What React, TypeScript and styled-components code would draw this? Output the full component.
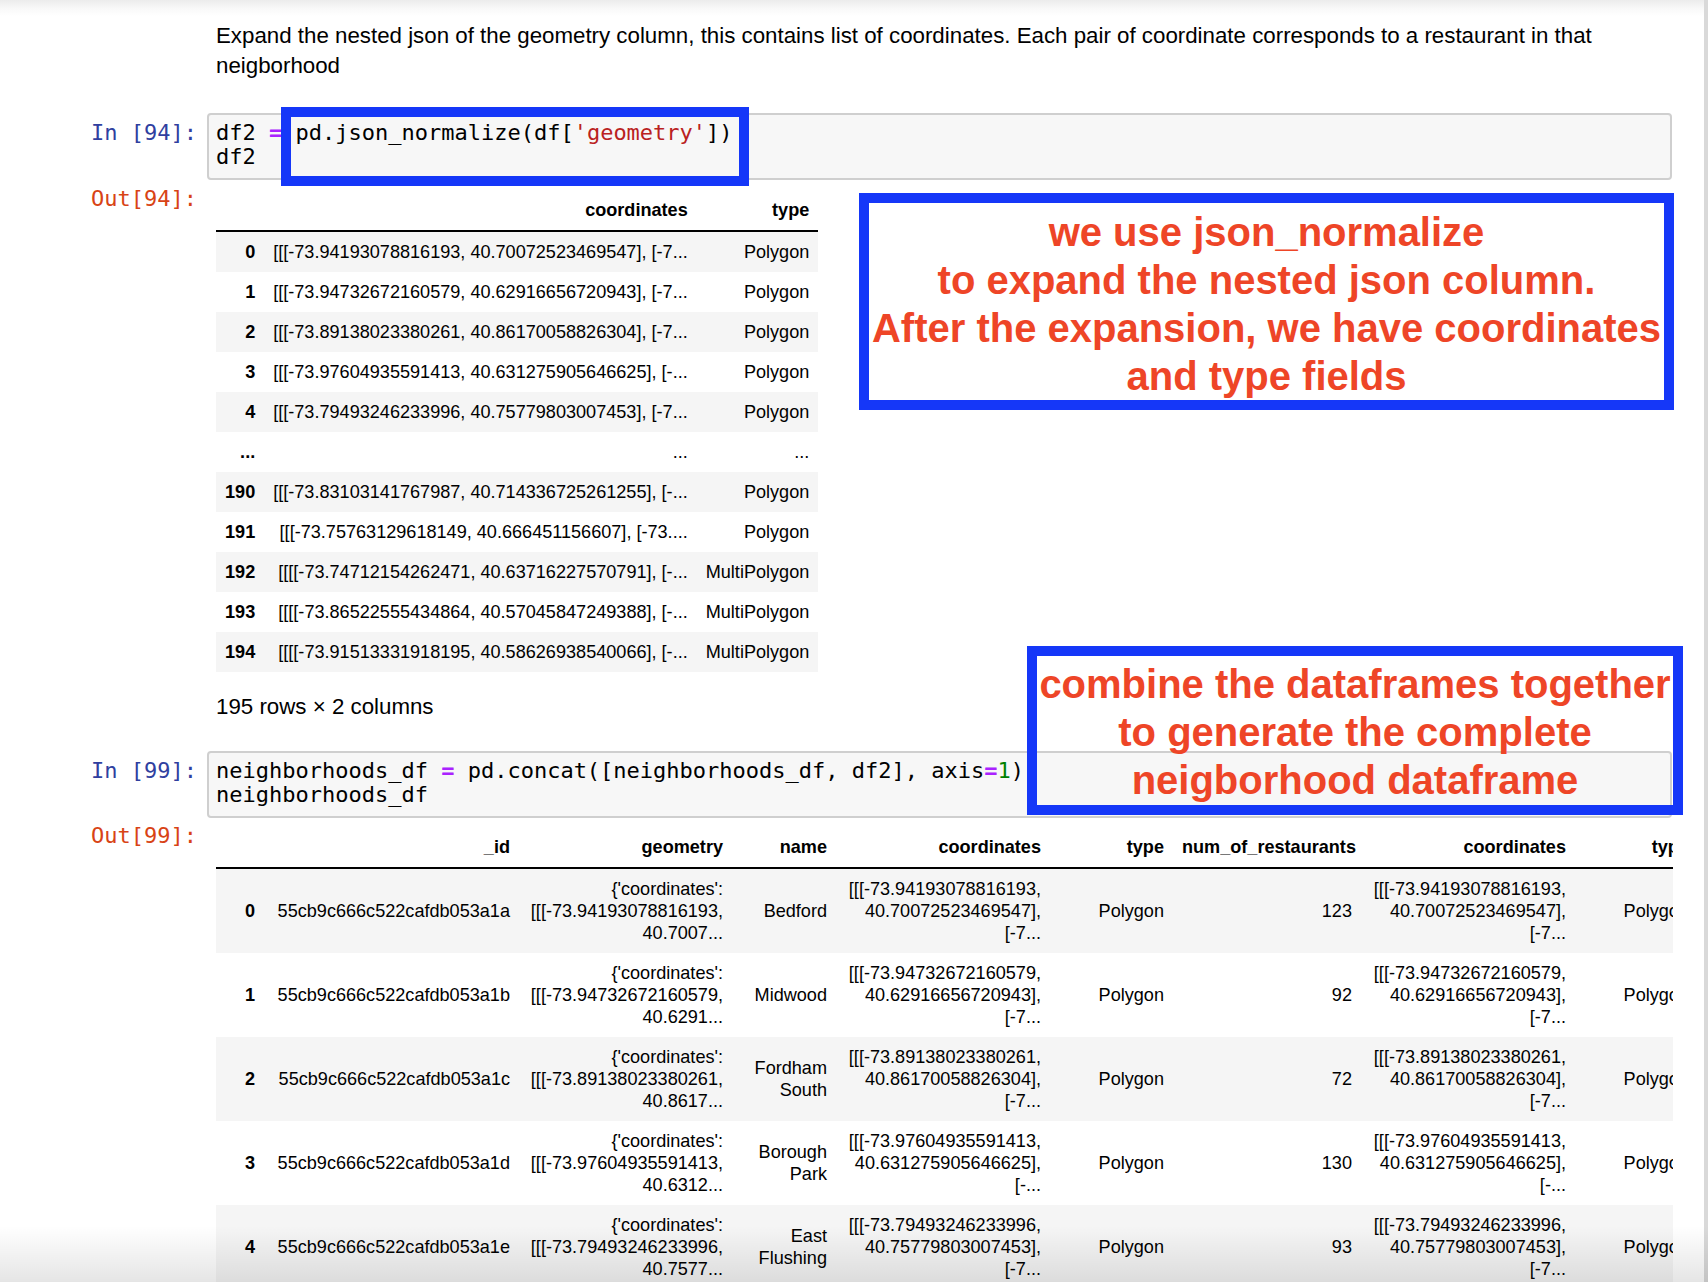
import React from "react";
import styled, { createGlobalStyle } from "styled-components";

const GlobalStyle = createGlobalStyle`
  html, body { margin: 0; padding: 0; background: #ffffff; }
  body {
    font-family: "Liberation Sans", Arial, Helvetica, sans-serif;
    color: #000;
  }
`;

const Screen = styled.div`
  position: relative;
  display: flex;
  height: 1282px;
  overflow: hidden;
  background: linear-gradient(#ececec 0px, #f8f8f8 8px, #ffffff 16px);
`;

const Notebook = styled.main`
  flex: 1;
  min-width: 0;
  padding-top: 21px;
`;

const ScrollTrack = styled.div`
  flex: 0 0 4px;
  background: #d9d9d9;
`;

const BottomShade = styled.div`
  position: absolute;
  left: 0;
  right: 0;
  bottom: 0;
  height: 56px;
  background: linear-gradient(rgba(0, 0, 0, 0), rgba(0, 0, 0, 0.1));
  pointer-events: none;
`;

const Cell = styled.section<{ $after: number }>`
  margin-bottom: ${(p) => p.$after}px;
`;

const Row = styled.div<{ $top?: number }>`
  position: relative;
  display: flex;
  align-items: flex-start;
  gap: 10px;
  margin-top: ${(p) => p.$top ?? 0}px;
`;

const Prompt = styled.div<{ $kind: "in" | "out" | "none" }>`
  flex: 0 0 197px;
  text-align: right;
  font-family: "DejaVu Sans Mono", "Liberation Mono", monospace;
  font-size: 22px;
  line-height: 24px;
  white-space: pre;
  color: ${(p) => (p.$kind === "out" ? "#D84315" : "#303F9F")};
  padding-top: ${(p) => (p.$kind === "in" ? 8 : 0)}px;
  margin-top: ${(p) => (p.$kind === "out" ? -2 : 0)}px;
`;

const Markdown = styled.div`
  flex: 0 0 1466px;
  box-sizing: border-box;
  padding: 0 9px;
`;

const Para = styled.p<{ $top?: number }>`
  margin: ${(p) => p.$top ?? 0}px 0 0;
  font-size: 22.3px;
  line-height: 29.5px;
`;

const CodeBox = styled.div`
  flex: 0 0 1465px;
  box-sizing: border-box;
  border: 2px solid #cfcfcf;
  border-radius: 4px;
  background: #f7f7f7;
  padding: 6px 7px 9px;
  font-family: "DejaVu Sans Mono", "Liberation Mono", monospace;
  font-size: 22px;
  line-height: 24px;
  white-space: pre;
  color: #000;
`;

const Op = styled.span`
  color: #aa22ff;
  font-weight: bold;
`;
const Str = styled.span`
  color: #ba2121;
`;
const Num = styled.span`
  color: #008000;
`;

const Output = styled.div`
  flex: 0 0 1466px;
  box-sizing: border-box;
  padding-left: 9px;
  padding-top: 1px;
  overflow: hidden;
`;

const DataTable = styled.table`
  border-collapse: collapse;
  border-spacing: 0;
  font-size: 18.1px;
  line-height: 22px;
  color: #000;

  tbody tr:nth-child(odd) {
    background: #f5f5f5;
  }
`;

const WideTable = styled(DataTable)`
  table-layout: fixed;
  width: 1482px;
`;

const Col = styled.col<{ $w: number }>`
  width: ${(p) => p.$w}px;
`;

const HeadCell = styled.th`
  text-align: right;
  vertical-align: bottom;
  padding: 9px;
  font-weight: bold;
  white-space: nowrap;
  border-bottom: 2px solid #000;
`;

const IndexCell = styled.th`
  text-align: right;
  vertical-align: middle;
  padding: 9px;
  font-weight: bold;
  white-space: nowrap;
`;

const DataCell = styled.td<{ $wrap?: boolean }>`
  text-align: right;
  vertical-align: middle;
  padding: 9px;
  white-space: ${(p) => (p.$wrap ? "normal" : "nowrap")};
`;

const Highlight = styled.div<{ $x: number; $y: number; $w: number; $h: number }>`
  position: absolute;
  left: ${(p) => p.$x}px;
  top: ${(p) => p.$y}px;
  width: ${(p) => p.$w}px;
  height: ${(p) => p.$h}px;
  box-sizing: border-box;
  border: 10px solid #1537f8;
  pointer-events: none;
`;

const Callout = styled(Highlight)<{ $pad: number }>`
  padding-top: ${(p) => p.$pad}px;
  text-align: center;
  font-family: "Liberation Sans", Arial, Helvetica, sans-serif;
  font-weight: bold;
  font-size: 40px;
  line-height: 48px;
  color: #ee4527;
  white-space: nowrap;
`;

const shortRows: [string, string, string][] = [
  ["0", "[[[-73.94193078816193, 40.70072523469547], [-7...", "Polygon"],
  ["1", "[[[-73.94732672160579, 40.62916656720943], [-7...", "Polygon"],
  ["2", "[[[-73.89138023380261, 40.86170058826304], [-7...", "Polygon"],
  ["3", "[[[-73.97604935591413, 40.631275905646625], [-...", "Polygon"],
  ["4", "[[[-73.79493246233996, 40.75779803007453], [-7...", "Polygon"],
  ["...", "...", "..."],
  ["190", "[[[-73.83103141767987, 40.714336725261255], [-...", "Polygon"],
  ["191", "[[[-73.75763129618149, 40.666451156607], [-73....", "Polygon"],
  ["192", "[[[[-73.74712154262471, 40.63716227570791], [-...", "MultiPolygon"],
  ["193", "[[[[-73.86522555434864, 40.57045847249388], [-...", "MultiPolygon"],
  ["194", "[[[[-73.91513331918195, 40.58626938540066], [-...", "MultiPolygon"],
];

type Hood = {
  idx: string;
  id: string;
  geometry: string;
  name: string;
  coords: string;
  type: string;
  count: string;
};

const hoods: Hood[] = [
  {
    idx: "0",
    id: "55cb9c666c522cafdb053a1a",
    geometry: "{'coordinates': [[[-73.94193078816193, 40.7007...",
    name: "Bedford",
    coords: "[[[-73.94193078816193, 40.70072523469547], [-7...",
    type: "Polygon",
    count: "123",
  },
  {
    idx: "1",
    id: "55cb9c666c522cafdb053a1b",
    geometry: "{'coordinates': [[[-73.94732672160579, 40.6291...",
    name: "Midwood",
    coords: "[[[-73.94732672160579, 40.62916656720943], [-7...",
    type: "Polygon",
    count: "92",
  },
  {
    idx: "2",
    id: "55cb9c666c522cafdb053a1c",
    geometry: "{'coordinates': [[[-73.89138023380261, 40.8617...",
    name: "Fordham South",
    coords: "[[[-73.89138023380261, 40.86170058826304], [-7...",
    type: "Polygon",
    count: "72",
  },
  {
    idx: "3",
    id: "55cb9c666c522cafdb053a1d",
    geometry: "{'coordinates': [[[-73.97604935591413, 40.6312...",
    name: "Borough Park",
    coords: "[[[-73.97604935591413, 40.631275905646625], [-...",
    type: "Polygon",
    count: "130",
  },
  {
    idx: "4",
    id: "55cb9c666c522cafdb053a1e",
    geometry: "{'coordinates': [[[-73.79493246233996, 40.7577...",
    name: "East Flushing",
    coords: "[[[-73.79493246233996, 40.75779803007453], [-7...",
    type: "Polygon",
    count: "93",
  },
];

const wideCols = [48, 255, 213, 104, 214, 123, 188, 214, 123];
const wideHead = ["", "_id", "geometry", "name", "coordinates", "type", "num_of_restaurants", "coordinates", "type"];

export default function App() {
  return (
    <>
      <GlobalStyle />
      <Screen>
        <Notebook>
          <Cell $after={33}>
            <Row>
              <Prompt $kind="none" />
              <Markdown>
                <Para>
                  Expand the nested json of the geometry column, this contains list of coordinates. Each pair of
                  coordinate corresponds to a restaurant in that neigborhood
                </Para>
              </Markdown>
            </Row>
          </Cell>

          <Cell $after={29}>
            <Row>
              <Prompt $kind="in">In [94]:</Prompt>
              <CodeBox>
                {"df2 "}
                <Op>=</Op>
                {" pd.json_normalize(df["}
                <Str>'geometry'</Str>
                {"])\ndf2"}
              </CodeBox>
              <Highlight $x={281} $y={-6} $w={468} $h={79} />
            </Row>
            <Row $top={9}>
              <Prompt $kind="out">Out[94]:</Prompt>
              <Output>
                <DataTable>
                  <thead>
                    <tr>
                      <HeadCell />
                      <HeadCell>coordinates</HeadCell>
                      <HeadCell>type</HeadCell>
                    </tr>
                  </thead>
                  <tbody>
                    {shortRows.map(([i, c, t]) => (
                      <tr key={i}>
                        <IndexCell>{i}</IndexCell>
                        <DataCell>{c}</DataCell>
                        <DataCell>{t}</DataCell>
                      </tr>
                    ))}
                  </tbody>
                </DataTable>
                <Para $top={20}>195 rows × 2 columns</Para>
              </Output>
              <Callout $x={859} $y={4} $w={815} $h={217} $pad={5}>
                we use json_normalize
                <br />
                to expand the nested json column.
                <br />
                After the expansion, we have coordinates
                <br />
                and type fields
              </Callout>
            </Row>
          </Cell>

          <Cell $after={0}>
            <Row>
              <Prompt $kind="in">In [99]:</Prompt>
              <CodeBox>
                {"neighborhoods_df "}
                <Op>=</Op>
                {" pd.concat([neighborhoods_df, df2], axis"}
                <Op>=</Op>
                <Num>1</Num>
                {")\nneighborhoods_df"}
              </CodeBox>
              <Callout $x={1027} $y={-105} $w={656} $h={169} $pad={4}>
                combine the dataframes together
                <br />
                to generate the complete
                <br />
                neigborhood dataframe
              </Callout>
            </Row>
            <Row $top={8}>
              <Prompt $kind="out">Out[99]:</Prompt>
              <Output>
                <WideTable>
                  <colgroup>
                    {wideCols.map((w, i) => (
                      <Col key={i} $w={w} />
                    ))}
                  </colgroup>
                  <thead>
                    <tr>
                      {wideHead.map((h, i) => (
                        <HeadCell key={i}>{h}</HeadCell>
                      ))}
                    </tr>
                  </thead>
                  <tbody>
                    {hoods.map((r) => (
                      <tr key={r.idx}>
                        <IndexCell>{r.idx}</IndexCell>
                        <DataCell $wrap>{r.id}</DataCell>
                        <DataCell $wrap>{r.geometry}</DataCell>
                        <DataCell $wrap>{r.name}</DataCell>
                        <DataCell $wrap>{r.coords}</DataCell>
                        <DataCell $wrap>{r.type}</DataCell>
                        <DataCell $wrap>{r.count}</DataCell>
                        <DataCell $wrap>{r.coords}</DataCell>
                        <DataCell $wrap>{r.type}</DataCell>
                      </tr>
                    ))}
                  </tbody>
                </WideTable>
              </Output>
            </Row>
          </Cell>
        </Notebook>
        <ScrollTrack />
        <BottomShade />
      </Screen>
    </>
  );
}
